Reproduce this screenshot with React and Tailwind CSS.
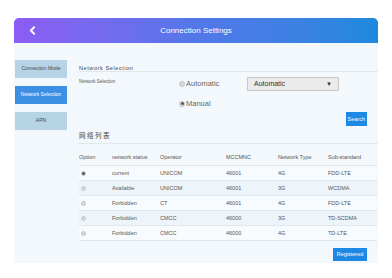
import React, { useState } from 'react';
import { ChevronLeft } from 'lucide-react';

const networks = [
  { status: 'current', operator: 'UNICOM', mccmnc: '46001', type: '4G', sub: 'FDD-LTE' },
  { status: 'Available', operator: 'UNICOM', mccmnc: '46001', type: '3G', sub: 'WCDMA' },
  { status: 'Forbidden', operator: 'CT', mccmnc: '46001', type: '4G', sub: 'FDD-LTE' },
  { status: 'Forbidden', operator: 'CMCC', mccmnc: '46000', type: '3G', sub: 'TD-SCDMA' },
  { status: 'Forbidden', operator: 'CMCC', mccmnc: '46000', type: '4G', sub: 'TD-LTE' },
];

const Radio = ({ checked, small }) => (
  <span
    className={`inline-flex items-center justify-center rounded-full bg-[#d4d8dc] border border-[#c2c7cc] ${small ? 'w-[5px] h-[5px]' : 'w-[6px] h-[6px]'}`}
  >
    {checked && <span className="w-[3px] h-[3px] rounded-full bg-[#555]" />}
  </span>
);

const App = () => {
  const [mode, setMode] = useState('manual');
  const [selected, setSelected] = useState(0);
  const [tab, setTab] = useState('network');

  const tabs = [
    { id: 'connection', label: 'Connection Mode' },
    { id: 'network', label: 'Network Selection' },
    { id: 'apn', label: 'APN' },
  ];

  return (
    <div className="w-[392px] h-[278px] bg-white pt-[18px] px-[14px] font-['Liberation_Sans',Arial,sans-serif]">
      {/* header */}
      <div className="relative h-[25px] rounded-t-[5px] bg-gradient-to-r from-[#8c5cf4] via-[#5277e9] to-[#1b89de] flex items-center justify-center">
        <ChevronLeft className="absolute left-[12px] text-white" size={13} strokeWidth={3.5} />
        <span className="text-white text-[8px]">Connection Settings</span>
      </div>

      <div className="h-[220px] bg-[#f3f8fc] flex">
        {/* sidebar */}
        <div className="w-[65px] pl-[1px] pt-[17px] flex flex-col gap-[8px]">
          {tabs.map(t => (
            <button
              key={t.id}
              onClick={() => setTab(t.id)}
              className={`w-[52px] h-[18px] flex items-center justify-center text-[5px] ${tab === t.id ? 'bg-[#3d8fe4] text-white' : 'bg-[#b7d4e6] text-[#445]'}`}
            >
              {t.label}
            </button>
          ))}
        </div>

        {/* main */}
        <div className="flex-1 text-[#444]">
          <div className="pt-[21px] h-[29px] border-b border-[#e3e8ec] text-[5.5px] tracking-[0.6px]">Network Selection</div>

          <div className="flex h-[36px]">
            <div className="w-[100px] pt-[7px] text-[4.5px] text-[#555]">Network Selection</div>
            <div className="w-[68px] flex flex-col pt-[6px] gap-[9px]">
              <label className="flex items-center gap-[1px] text-[7.5px] text-[#666] cursor-pointer" onClick={() => setMode('auto')}>
                <Radio checked={mode === 'auto'} />Automatic
              </label>
              <label className="flex items-center gap-[1px] text-[7.5px] text-[#666] cursor-pointer" onClick={() => setMode('manual')}>
                <Radio checked={mode === 'manual'} />Manual
              </label>
            </div>
            <div className="pt-[5px]">
              <div className="w-[92px] h-[14px] bg-[#ebebeb] border border-[#c8c8c8] flex items-center justify-between px-[6px] text-[7px] text-[#333]">
                <span>Automatic</span>
                <span className="text-[6px]">▼</span>
              </div>
            </div>
          </div>

          <div className="flex justify-end pr-[11px] pt-[4px]">
            <button className="h-[14px] px-[2px] bg-[#1e88e5] text-white text-[5.5px]">Search</button>
          </div>

          <div className="mt-[3px] h-[15px] border-b border-[#e3e8ec] text-[6.5px] tracking-[1.5px] font-['Noto_Sans_CJK_SC',sans-serif] leading-[12px]">网络列表</div>

          <div className="mt-[6px] mr-[1px] text-[5.5px] text-[#555]">
            <div className="flex h-[15px] items-center">
              <div className="w-[33px]">Option</div>
              <div className="w-[48px]">network status</div>
              <div className="w-[66px]">Operator</div>
              <div className="w-[52px]">MCCMNC</div>
              <div className="w-[50px]">Network Type</div>
              <div>Sub-standard</div>
            </div>
            {networks.map((n, i) => (
              <div
                key={i}
                onClick={() => setSelected(i)}
                className={`flex h-[15px] items-center border-t border-[#e2e7eb] cursor-pointer ${i % 2 === 1 ? 'bg-[#eef5fa]' : 'bg-[#f8fbfd]'}`}
              >
                <div className="w-[33px] pl-[2px] flex"><Radio small checked={selected === i} /></div>
                <div className="w-[48px]">{n.status}</div>
                <div className="w-[66px]">{n.operator}</div>
                <div className="w-[52px]">{n.mccmnc}</div>
                <div className="w-[50px]">{n.type}</div>
                <div>{n.sub}</div>
              </div>
            ))}
            <div className="border-t border-[#dfe5ea]" />
          </div>

          <div className="flex justify-end pr-[11px] pt-[7px]">
            <button className="h-[13px] w-[34px] bg-[#1e88e5] text-white text-[5.5px]">Registered</button>
          </div>
        </div>
      </div>
    </div>
  );
};

export default App;
